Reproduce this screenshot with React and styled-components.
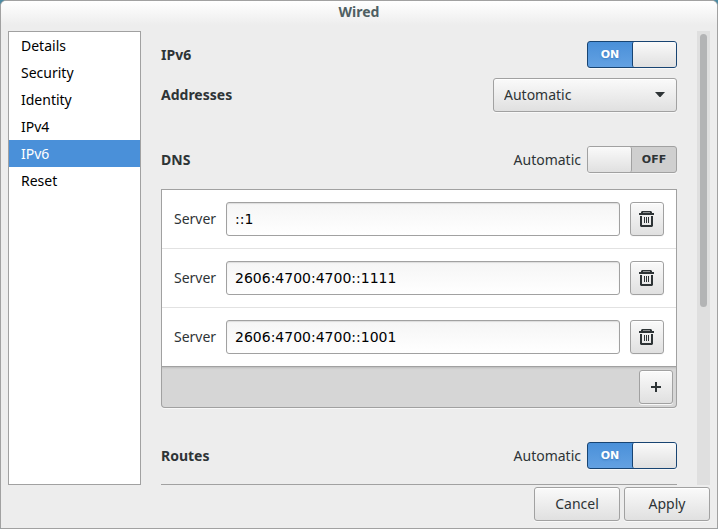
import React, { useState } from 'react';
import styled, { createGlobalStyle, css } from 'styled-components';

const GlobalStyle = createGlobalStyle`
  * {
    box-sizing: border-box;
  }

  body {
    margin: 0;
    background: #4d8ba3;
    color: #2e3436;
    font: 14px/20px "Noto Sans", "Open Sans", sans-serif;
  }

  button,
  input,
  select {
    font: inherit;
    color: inherit;
  }
`;

const raised = css`
  border: 1px solid #a1a1a1;
  border-radius: 3px;
  background: linear-gradient(#fafafa, #e0e0e0);
  box-shadow: inset 0 1px #fff, 0 1px #f8f8f8;
`;

const Dialog = styled.div`
  display: flex;
  flex-direction: column;
  height: 100vh;
  border: 1px solid #a1a1a1;
  border-radius: 6px 6px 0 0;
  background: #ededed;
`;

const TitleBar = styled.header`
  height: 30px;
  border-radius: 5px 5px 0 0;
  background: linear-gradient(#fff, #ededed 24px);
  text-align: center;
`;

const Title = styled.h1`
  margin: 0;
  color: #4f5f63;
  font-size: 14px;
  line-height: 22px;
`;

const Body = styled.div`
  display: flex;
  flex: 1;
  min-height: 0;
  padding: 0 7px;
`;

const Sidebar = styled.nav`
  width: 133px;
  border: 1px solid #a1a1a1;
  background: #fff;
`;

const SidebarLink = styled.a`
  display: block;
  padding: 0 12px;
  color: ${({ $active }) => ($active ? '#fff' : '#000')};
  background: ${({ $active }) => ($active ? '#4a90d9' : 'transparent')};
  line-height: 27px;
  text-decoration: none;
`;

const Content = styled.main`
  flex: 1;
  overflow: hidden;
  padding: 10px 20px 0;
`;

const Section = styled.section`
  margin-bottom: 34px;
`;

const Line = styled.div`
  display: flex;
  align-items: center;
  justify-content: space-between;
  margin-bottom: ${({ $gap = 0 }) => $gap}px;
`;

const Heading = styled.h2`
  margin: 0;
  font-size: 14px;
  line-height: 20px;
`;

const HeadingLabel = styled.label`
  font-weight: bold;
`;

const SwitchLabel = styled.label`
  display: flex;
  align-items: center;
  gap: 6px;
`;

const SwitchTrack = styled.span`
  display: grid;
  grid-template-columns: 1fr 1fr;
  width: 90px;
  height: 27px;
  border: 1px solid ${({ $on }) => ($on ? '#184472' : '#a1a1a1')};
  border-radius: 3px;
  background: ${({ $on }) => ($on ? 'linear-gradient(#4a90d9, #63a1e2)' : '#cfcfcf')};
  box-shadow: 0 1px #f8f8f8;
  color: ${({ $on }) => ($on ? '#fff' : '#2e3436')};
  font-family: "DejaVu Sans", sans-serif;
  font-size: 11px;
  font-weight: bold;
  line-height: 25px;
  text-align: center;
  text-shadow: ${({ $on }) => ($on ? '0 1px 2px #3b7cc0' : 'none')};
`;

const SwitchInput = styled.input`
  appearance: none;
  order: ${({ checked }) => (checked ? 1 : 0)};
  margin: 0;
  border: 0 solid ${({ checked }) => (checked ? '#184472' : '#a1a1a1')};
  border-width: ${({ checked }) => (checked ? '0 0 0 1px' : '0 1px 0 0')};
  border-radius: 2px;
  background: linear-gradient(#fafafa, #e0e0e0);
`;

const SelectBox = styled.span`
  position: relative;
  display: block;
  width: 184px;
`;

const Select = styled.select`
  ${raised}
  appearance: none;
  width: 100%;
  height: 34px;
  padding: 0 30px 0 10px;
`;

const SelectArrow = styled.svg`
  position: absolute;
  top: 14px;
  right: 12px;
  pointer-events: none;
`;

const ServerList = styled.ul`
  margin: 0;
  padding: 0;
  border: 1px solid #a1a1a1;
  background: #fff;
  list-style: none;
`;

const ServerRow = styled.li`
  display: grid;
  grid-template-columns: 42px 1fr 34px;
  gap: 10px;
  align-items: center;
  padding: 12px;

  & + & {
    border-top: 1px solid #e2e2e2;
  }
`;

const Entry = styled.input`
  width: 100%;
  height: 34px;
  padding: 0 8px;
  border: 1px solid #a1a1a1;
  border-radius: 3px;
  background: linear-gradient(#f5f5f5, #fff);
  box-shadow: inset 0 1px 1px #ddd;
  color: #000;
  font-family: "DejaVu Sans", sans-serif;
`;

const IconButton = styled.button`
  ${raised}
  display: grid;
  place-items: center;
  width: 34px;
  height: 34px;
  padding: 0;
`;

const ListToolbar = styled.div`
  display: flex;
  justify-content: flex-end;
  padding: 3px;
  border: 1px solid #a1a1a1;
  border-top: 0;
  border-radius: 0 0 4px 4px;
  background: #d6d6d6;
  box-shadow: inset 0 2px 2px -1px #bbb, 0 1px #f8f8f8;
`;

const ScrollTrack = styled.div`
  width: 13px;
  padding: 3px;
  background: #dfdfdf;
`;

const ScrollThumb = styled.div`
  width: 7px;
  height: 61%;
  border-radius: 4px;
  background: #b3b4b5;
`;

const Footer = styled.footer`
  display: flex;
  justify-content: flex-end;
  gap: 4px;
  padding: 2px 7px 7px;
`;

const FooterButton = styled.button`
  ${raised}
  width: 86px;
  height: 34px;
  padding: 0;
`;

const TrashIcon = () => (
  <svg width="16" height="16" viewBox="0 0 16 16" fill="#2e3436" aria-hidden="true">
    <path d="M0 2h2V1l1-1h9l1 1v1h2v2H0zM4 1.400V2h7v-.6z" fillRule="evenodd" />
    <path d="M1 5h2v9h9V5h2v10l-1 1H2l-1-1z" />
    <path d="M5 6h1v6H5zM7 6h1v6H7zM9 6h1v6H9z" />
  </svg>
);

const PlusIcon = () => (
  <svg width="10" height="10" viewBox="0 0 10 10" fill="#2e3436" aria-hidden="true">
    <path d="M4 0h2v4h4v2H6v4H4V6H0V4h4z" />
  </svg>
);

function Switch({ label, name, initial = false }) {
  const [on, setOn] = useState(initial);

  return (
    <SwitchLabel>
      {label}
      <SwitchTrack $on={on}>
        <SwitchInput
          type="checkbox"
          role="switch"
          aria-label={name}
          checked={on}
          onChange={(e) => setOn(e.target.checked)}
        />
        <span>{on ? 'ON' : 'OFF'}</span>
      </SwitchTrack>
    </SwitchLabel>
  );
}

const pages = ['Details', 'Security', 'Identity', 'IPv4', 'IPv6', 'Reset'];
const servers = ['::1', '2606:4700:4700::1111', '2606:4700:4700::1001'];

function App() {
  return (
    <>
      <GlobalStyle />
      <Dialog>
        <TitleBar>
          <Title>Wired</Title>
        </TitleBar>
        <Body>
          <Sidebar>
            {pages.map((page) => (
              <SidebarLink key={page} href={`#${page}`} $active={page === 'IPv6'}>
                {page}
              </SidebarLink>
            ))}
          </Sidebar>
          <Content>
            <Section>
              <Line $gap={10}>
                <Heading>IPv6</Heading>
                <Switch name="IPv6" initial />
              </Line>
              <Line>
                <HeadingLabel htmlFor="addresses">Addresses</HeadingLabel>
                <SelectBox>
                  <Select id="addresses" defaultValue="Automatic">
                    <option>Automatic</option>
                  </Select>
                  <SelectArrow width="10" height="5" viewBox="0 0 10 5">
                    <path d="M0 0h10L5.500 5h-1z" fill="#2e3436" />
                  </SelectArrow>
                </SelectBox>
              </Line>
            </Section>
            <Section>
              <Line $gap={16}>
                <Heading>DNS</Heading>
                <Switch label="Automatic" name="Automatic DNS" />
              </Line>
              <ServerList>
                {servers.map((server, i) => (
                  <ServerRow key={server}>
                    <label htmlFor={`server-${i}`}>Server</label>
                    <Entry id={`server-${i}`} defaultValue={server} />
                    <IconButton type="button" aria-label="Delete">
                      <TrashIcon />
                    </IconButton>
                  </ServerRow>
                ))}
              </ServerList>
              <ListToolbar>
                <IconButton type="button" aria-label="Add">
                  <PlusIcon />
                </IconButton>
              </ListToolbar>
            </Section>
            <Section>
              <Line $gap={15}>
                <Heading>Routes</Heading>
                <Switch label="Automatic" name="Automatic routes" initial />
              </Line>
              <ServerList />
            </Section>
          </Content>
          <ScrollTrack>
            <ScrollThumb />
          </ScrollTrack>
        </Body>
        <Footer>
          <FooterButton type="button">Cancel</FooterButton>
          <FooterButton type="button">Apply</FooterButton>
        </Footer>
      </Dialog>
    </>
  );
}

export default App;
